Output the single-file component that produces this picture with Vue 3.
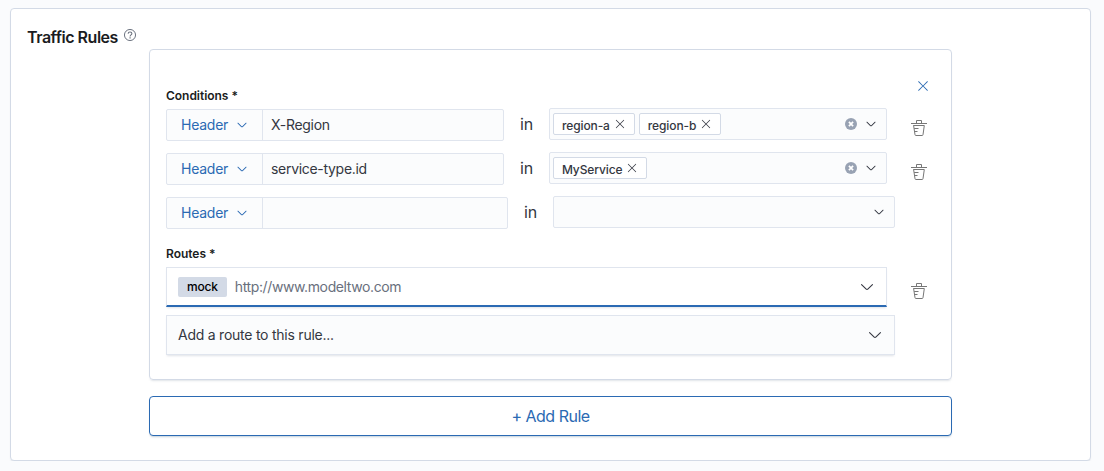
<script setup>
const conditions = [
  { key: 'X-Region', values: ['region-a', 'region-b'] },
  { key: 'service-type.id', values: ['MyService'] },
  { key: '', values: [] },
]
const chevron =
  'M13.069 5.157L8.384 9.768a.546.546 0 01-.768 0L2.93 5.158a.552.552 0 00-.771 0 .53.53 0 000 .759l4.684 4.61c.641.631 1.672.63 2.312 0l4.684-4.61a.53.53 0 000-.76.552.552 0 00-.771 0z'
const cross =
  'M7.293 8L2.646 3.354a.5.5 0 01.708-.708L8 7.293l4.646-4.647a.5.5 0 01.708.708L8.707 8l4.647 4.646a.5.5 0 01-.708.708L8 8.707l-4.646 4.647a.5.5 0 01-.708-.708L7.293 8z'
</script>

<template>
  <main class="panel">
    <header class="title">
      <h2>Traffic Rules</h2>
      <svg class="help" width="12" height="12" viewBox="0 0 16 16" fill="none" stroke="#69707d">
        <circle cx="8" cy="8" r="7.4" stroke-width="1.3" />
        <path d="M5.5 6.4C5.5 4.8 6.5 3.9 8 3.9s2.5.9 2.5 2.1c0 1.8-2.4 1.9-2.4 3.9" stroke-width="1.4" />
        <path d="M8.1 11.1v1.5" stroke-width="1.6" />
      </svg>
    </header>

    <section class="rule">
      <button class="close" aria-label="Remove rule">
        <svg width="14" height="14" viewBox="0 0 16 16" fill="#2b6ab3"><path :d="cross" /></svg>
      </button>
      <div class="label">Conditions *</div>

      <div class="conditions">
        <div v-for="(c, i) in conditions" :key="i" class="line">
          <div class="condition" :class="{ wide: !c.values.length }">
            <div class="group">
              <button class="prepend">
                <span>Header</span>
                <svg width="12" height="12" viewBox="0 0 16 16" fill="#2b6ab3"><path :d="chevron" /></svg>
              </button>
              <div class="field">{{ c.key }}</div>
            </div>
            <span class="in">in</span>
            <div class="combo">
              <span v-for="v in c.values" :key="v" class="pill">
                <span>{{ v }}</span>
                <svg width="12" height="12" viewBox="0 0 16 16" fill="#343741"><path :d="cross" /></svg>
              </span>
              <span class="tools">
                <svg v-if="c.values.length" width="12" height="12" viewBox="0 0 12 12">
                  <circle cx="6" cy="6" r="6" fill="#98a2b3" />
                  <path d="M3.9 3.9l4.2 4.2M8.1 3.9L3.9 8.1" stroke="#fff" stroke-width="1.7" />
                </svg>
                <svg width="12" height="12" viewBox="0 0 16 16" fill="#343741"><path :d="chevron" /></svg>
              </span>
            </div>
          </div>
          <svg v-if="c.values.length" class="trash" width="16" height="16" viewBox="0 0 16 16" fill="none" stroke="#777">
            <path d="M0 3.5h16M5.5 3.5v-3h5v3M2.3 5.5h11M2.6 5.5l1.4 9.2q.1.8.9.8h6.2q.8 0 .9-.8l1.3-9.2M3.2 8.5h4.3M3.6 11.5h2.9" />
          </svg>
        </div>
      </div>

      <div class="label routes-label">Routes *</div>
      <div class="line">
        <div class="select active">
          <span class="badge">mock</span>
          <span class="url">http://www.modeltwo.com</span>
          <svg width="16" height="16" viewBox="0 0 16 16" fill="#343741"><path :d="chevron" /></svg>
        </div>
        <svg class="trash" width="16" height="16" viewBox="0 0 16 16" fill="none" stroke="#777">
          <path d="M0 3.5h16M5.5 3.5v-3h5v3M2.3 5.5h11M2.6 5.5l1.4 9.2q.1.8.9.8h6.2q.8 0 .9-.8l1.3-9.2M3.2 8.5h4.3M3.6 11.5h2.9" />
        </svg>
      </div>
      <div class="select add-route">
        <span>Add a route to this rule...</span>
        <svg width="16" height="16" viewBox="0 0 16 16" fill="#343741"><path :d="chevron" /></svg>
      </div>
    </section>

    <button class="add-rule">+ Add Rule</button>
  </main>
</template>

<style>
body {
  background: #fafbfd;
}
</style>

<style scoped>
* {
  box-sizing: border-box;
}
svg {
  display: block;
  flex: none;
}
button {
  font: inherit;
  letter-spacing: inherit;
  cursor: pointer;
}
.panel {
  width: 1081px;
  height: 453px;
  margin: 8px 0 0 10px;
  padding: 0 16px;
  display: flow-root;
  background: #fff;
  border: 1px solid #d3dae6;
  border-radius: 4px;
  box-shadow: 0 2px 2px -1px rgba(152, 162, 179, 0.3);
  font-family: Inter, 'Liberation Sans', sans-serif;
  font-size: 14px;
  font-weight: 420;
  letter-spacing: -0.24px;
  color: #343741;
}
.title {
  display: flex;
  height: 40px;
  padding-top: 16px;
}
h2 {
  margin: 0;
  font-size: 16px;
  line-height: 24px;
  font-weight: 600;
  letter-spacing: -0.48px;
  color: #1a1c21;
}
.help {
  margin: 4px 0 0 6px;
}
.rule {
  width: 803px;
  height: 331px;
  margin-left: 122px;
  padding: 0 16px;
  display: flow-root;
  border: 1px solid #d3dae6;
  border-radius: 4px;
  box-shadow: 0 2px 2px -1px rgba(152, 162, 179, 0.3);
}
.close {
  display: block;
  margin: 29px 5px 0 auto;
  padding: 0;
  border: 0;
  background: none;
}
.label {
  margin-top: -6px;
  font-size: 12px;
  line-height: 18px;
  font-weight: 600;
  letter-spacing: -0.03px;
  color: #1a1c21;
}
.conditions {
  margin-top: 3px;
  display: grid;
  gap: 11px;
}
.line {
  display: flex;
  align-items: center;
}
.condition {
  width: 721px;
  height: 33px;
  display: grid;
  grid-template-columns: 1fr auto 1fr;
  gap: 16px;
}
.wide {
  width: 729px;
}
.group {
  min-width: 0;
  margin-top: 1px;
  height: 32px;
  display: flex;
  background: #fbfcfd;
  border: 1px solid #e0e5ee;
  border-radius: 2px;
}
.prepend {
  width: 96px;
  padding: 0 14px;
  display: flex;
  align-items: center;
  justify-content: space-between;
  color: #2b6ab3;
  background: none;
  border: 0;
  border-right: 1px solid #e0e5ee;
}
.prepend span {
  line-height: 16px;
}
.field {
  padding-left: 8px;
  line-height: 30px;
  letter-spacing: -0.3px;
}
.in {
  font-size: 16px;
  line-height: 32px;
}
.combo {
  min-width: 0;
  height: 32px;
  display: flex;
  align-items: center;
  gap: 4px;
  padding: 0 9px 0 3px;
  background: #fbfcfd;
  border: 1px solid #e0e5ee;
  border-radius: 2px;
}
.pill {
  height: 22px;
  display: flex;
  align-items: center;
  gap: 4px;
  padding: 0 8px;
  font-size: 12px;
  line-height: 16px;
  font-weight: 500;
  letter-spacing: -0.11px;
  background: #fff;
  border: 1px solid #d3dae6;
  border-radius: 2px;
}
.pill span {
  padding-top: 3px;
}
.tools {
  display: flex;
  gap: 8px;
  margin-left: auto;
}
.trash {
  margin: 7px 0 0 24px;
}
.routes-label {
  margin: 16px 0 4px;
}
.select {
  width: 721px;
  height: 40px;
  display: flex;
  align-items: center;
  padding: 0 11px;
  background: #fff;
  border: 1px solid #e0e5ee;
  box-shadow: 0 2px 2px -1px rgba(152, 162, 179, 0.3);
}
.select svg {
  margin-left: auto;
}
.active {
  border-bottom: 2px solid #2b6ab3;
}
.active + .trash {
  margin-top: 8px;
}
.badge {
  padding: 0 9px;
  margin-right: 8px;
  font-size: 12px;
  line-height: 20px;
  font-weight: 500;
  letter-spacing: -0.2px;
  color: #000;
  background: #d3dae6;
  border-radius: 2px;
}
.url {
  letter-spacing: -0.38px;
  color: #69707d;
}
.add-route {
  width: 729px;
  margin-top: 8px;
  background: #fbfcfd;
}
.add-route span {
  padding-bottom: 2px;
}
.add-rule {
  display: block;
  width: 803px;
  height: 40px;
  margin: 16px 0 0 122px;
  padding: 0;
  font-size: 16px;
  letter-spacing: -0.5px;
  color: #2b6ab3;
  background: #fff;
  border: 1px solid #2b6ab3;
  border-radius: 4px;
  box-shadow: 0 2px 2px -1px rgba(54, 97, 126, 0.3);
}
</style>
